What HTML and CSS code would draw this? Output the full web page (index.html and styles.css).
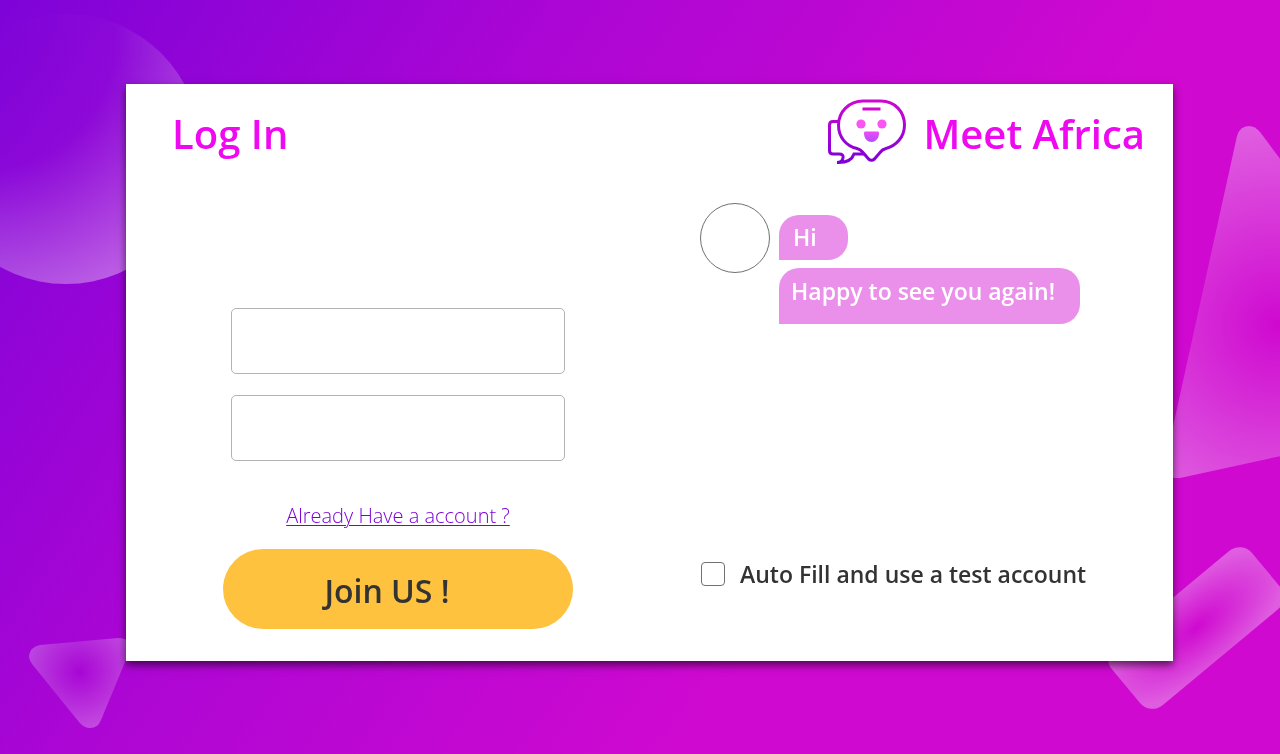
FILE: index.html
```html
<!DOCTYPE html>
<html lang="en">
<head>
  <meta charset="utf-8">
  <meta name="viewport" content="width=device-width, initial-scale=1">
  <title>Meet Africa - Log In</title>
  <link rel="stylesheet" href="styles.css">
</head>
<body>
  <svg class="backdrop" viewBox="0 0 1280 754" preserveAspectRatio="xMidYMid slice" aria-hidden="true">
    <defs>
      <linearGradient id="sky" gradientUnits="userSpaceOnUse" x1="0" y1="0" x2="816" y2="552">
        <stop offset="0" stop-color="#7e03d8"/>
        <stop offset=".5" stop-color="#ad06d4"/>
        <stop offset="1" stop-color="#cf09d0"/>
      </linearGradient>
      <radialGradient id="moon" gradientUnits="userSpaceOnUse" cx="-15" cy="40" r="270">
        <stop offset="0" stop-color="#fff" stop-opacity="0"/>
        <stop offset=".48" stop-color="#fff" stop-opacity=".02"/>
        <stop offset="1" stop-color="#fff" stop-opacity=".36"/>
      </radialGradient>
      <radialGradient id="peak" gradientUnits="userSpaceOnUse" cx="1277" cy="325" r="200">
        <stop offset="0" stop-color="#fff" stop-opacity="0"/>
        <stop offset="1" stop-color="#fff" stop-opacity=".35"/>
      </radialGradient>
      <radialGradient id="chip" gradientUnits="userSpaceOnUse" cx="80" cy="672" r="62">
        <stop offset="0" stop-color="#fff" stop-opacity="0"/>
        <stop offset="1" stop-color="#fff" stop-opacity=".3"/>
      </radialGradient>
      <radialGradient id="bar" cx=".5" cy=".5" r=".6">
        <stop offset="0" stop-color="#fff" stop-opacity="0"/>
        <stop offset="1" stop-color="#fff" stop-opacity=".34"/>
      </radialGradient>
    </defs>
    <rect width="1280" height="754" fill="url(#sky)"/>
    <circle cx="66" cy="149" r="135" fill="url(#moon)"/>
    <path fill="url(#peak)" d="M1237 136Q1240 126 1249 126Q1255 126 1260 132L1400 320V430L1180 478Q1162 479 1165 463Z"/>
    <rect x="1105" y="590" width="182" height="76" rx="16" fill="url(#bar)" transform="rotate(-39.7 1196 628)"/>
    <path fill="url(#chip)" d="M40 645L118 638Q132 638 130 650L101 720Q98 728 90 728Q84 728 79 722L32 664Q29 660 29 656Q30 647 40 645Z"/>
  </svg>

  <main class="card">
    <section class="login">
      <h1 class="title">Log In</h1>
      <form class="form">
        <input class="field" type="email" aria-label="Email">
        <input class="field" type="password" aria-label="Password">
        <a class="account-link" href="#">Already Have a account ?</a>
        <button class="join" type="submit">Join US !</button>
      </form>
    </section>

    <section class="welcome">
      <header class="brand">
        <svg class="logo" viewBox="0 0 80 68" fill="none" aria-hidden="true">
          <defs>
            <linearGradient id="line" gradientUnits="userSpaceOnUse" x1="0" y1="8" x2="0" y2="72">
              <stop offset="0" stop-color="#cf09d0"/>
              <stop offset="1" stop-color="#7e00d8"/>
            </linearGradient>
            <linearGradient id="smile" x1="0" y1="0" x2="0" y2="1">
              <stop offset="0" stop-color="#ee4bf5"/>
              <stop offset="1" stop-color="#b14cff"/>
            </linearGradient>
          </defs>
          <g transform="translate(-7 -7)">
            <path stroke="url(#line)" stroke-width="3" d="M43 10H61C75 10 84.500 21 84.500 34C84.500 46 76 55 66 57.500C63 58.200 61.500 59.500 60 61.500L54.500 68Q51.500 70.500 48.500 68L43 61.500C41.500 59.500 40 58.200 37 57.500C26 55 18.500 46 18.500 34C18.500 21 29 10 43 10Z"/>
            <path stroke="url(#line)" stroke-width="3" d="M18 30.500H13Q9.500 30.500 9.500 34V59.500Q9.500 63 13 63H19Q24 63 23 67Q22 71.500 17 71.500Q31 72 34 63H44"/>
            <path fill="#cf09d0" d="M42.500 16.500H60.500V19.500H42.500Z"/>
            <circle cx="41" cy="33" r="4.600" fill="#f955f5"/>
            <circle cx="62" cy="33" r="4.600" fill="#f955f5"/>
            <path fill="url(#smile)" d="M45 40.500H58Q59 40.500 59 42C59 54 44 54 44 42Q44 40.500 45 40.500Z"/>
          </g>
        </svg>
        <span class="title">Meet Africa</span>
      </header>

      <div class="chat">
        <div class="avatar"></div>
        <div class="messages">
          <p class="bubble bubble-short">Hi</p>
          <p class="bubble bubble-long">Happy to see you again!</p>
        </div>
      </div>

      <label class="autofill">
        <input class="tick" type="checkbox">
        <span>Auto Fill and use a test account</span>
      </label>
    </section>
  </main>
</body>
</html>
```
FILE: styles.css
```css
* {
  box-sizing: border-box;
}

body {
  margin: 0;
  min-height: 100vh;
  padding: 84px 107px 93px 126px;
  background: #cf09d0;
  color: #333;
  font-family: "Open Sans", "Noto Sans", sans-serif;
  font-weight: 600;
}

.backdrop {
  position: fixed;
  inset: 0;
  width: 100%;
  height: 100%;
}

.card {
  position: relative;
  display: grid;
  grid-template-columns: 544fr 503fr;
  background: #fff;
  box-shadow: 0 4px 8px rgba(0, 0, 0, 0.6);
}

.title {
  margin: 0;
  color: #ee09f0;
  font-size: 40px;
  font-weight: 600;
  line-height: 100px;
}

.login {
  padding-bottom: 32px;
}

.login .title {
  padding-left: 46px;
}

.form {
  display: flex;
  flex-direction: column;
  align-items: center;
  padding-top: 124px;
}

.field {
  width: 334px;
  height: 66px;
  margin-bottom: 21px;
  padding: 0 16px;
  border: 1px solid #b3b3b3;
  border-radius: 5px;
  background: #fff;
  font: inherit;
  font-size: 20px;
}

.account-link {
  margin: 20px 0 19px;
  color: #7e00d8;
  font-size: 20px;
  font-weight: 300;
  line-height: 28px;
  text-decoration-thickness: 1px;
  text-underline-offset: 2px;
}

.join {
  width: 350px;
  height: 80px;
  padding: 3px 22px 0 0;
  border: 0;
  border-radius: 40px;
  background: #ffc23e;
  color: #333;
  font: inherit;
  font-size: 32px;
}

.welcome {
  display: flex;
  flex-direction: column;
  padding: 0 28px 71px 30px;
}

.brand {
  display: flex;
  align-items: center;
  justify-content: flex-end;
  gap: 16px;
}

.logo {
  width: 80px;
  height: 68px;
  margin-bottom: 5px;
}

.chat {
  display: flex;
  gap: 9px;
  padding-top: 19px;
}

.avatar {
  width: 70px;
  height: 70px;
  border: 1px solid #707070;
  border-radius: 50%;
}

.messages {
  display: flex;
  flex-direction: column;
  align-items: flex-start;
  gap: 8px;
  padding-top: 12px;
}

.bubble {
  margin: 0;
  border-radius: 20px 20px 20px 0;
  background: #ea90ea;
  color: #fff;
  font-size: 23px;
  line-height: 45px;
}

.bubble-short {
  width: 69px;
  padding-left: 14px;
}

.bubble-long {
  width: 301px;
  padding: 1px 0 10px 12px;
}

.autofill {
  display: flex;
  align-items: center;
  gap: 15px;
  margin-top: auto;
  padding-left: 1px;
  font-size: 23px;
  line-height: 32px;
}

.tick {
  appearance: none;
  width: 24px;
  height: 24px;
  margin: 0;
  border: 1px solid #707070;
  border-radius: 4px;
  background: #fff;
}

.tick:checked {
  background: #7e00d8;
}
```
